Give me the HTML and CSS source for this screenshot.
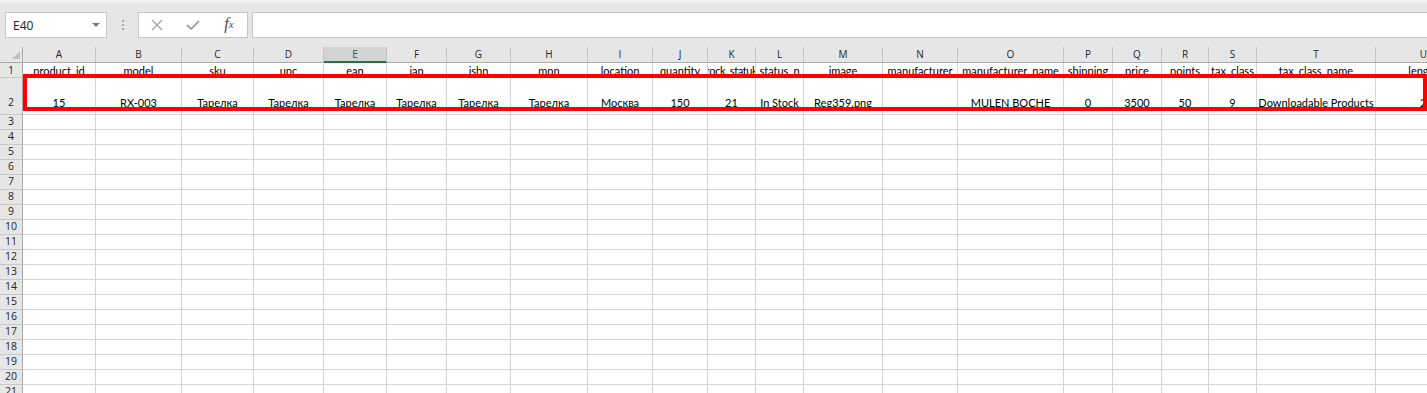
FILE: index.html
```html
<!DOCTYPE html>
<html lang="en">

<head>
  <meta charset="UTF-8" />
  <title>products.xlsx - Excel</title>
  <meta name="viewport" content="width=device-width, initial-scale=1.0" />
  <link rel="stylesheet" href="styles.css">
</head>

<body>
  <!-- Formula bar -->
  <div class="formula-bar">
    <div class="name-box">
      <span>E40</span>
      <span class="caret"></span>
    </div>
    <div class="grip"><i></i><i></i><i></i></div>
    <div class="fx-buttons">
      <span class="fx-btn">
        <svg width="12" height="12" viewBox="0 0 12 12">
          <path d="M1 1 L11 11 M11 1 L1 11" stroke="#a3a3a3" stroke-width="1.3" fill="none" />
        </svg>
      </span>
      <span class="fx-btn">
        <svg width="14" height="10" viewBox="0 0 14 10">
          <path d="M1 5 L5 9 L13 1" stroke="#a3a3a3" stroke-width="1.8" fill="none" />
        </svg>
      </span>
      <span class="fx-btn fx">f<sub>x</sub></span>
    </div>
    <div class="formula-input"></div>
  </div>

  <!-- Sheet -->
  <div class="sheet" id="sheet">
    <div class="row heads">
      <div class="corner"><span class="tri"></span></div>
      <div>A</div><div>B</div><div>C</div><div>D</div><div class="active">E</div>
      <div>F</div><div>G</div><div>H</div><div>I</div><div>J</div><div>K</div>
      <div>L</div><div>M</div><div>N</div><div>O</div><div>P</div><div>Q</div>
      <div>R</div><div>S</div><div>T</div><div>U</div>
    </div>

    <div class="row r1">
      <div class="rh">1</div>
      <div>product_id</div><div>model</div><div>sku</div><div>upc</div><div>ean</div>
      <div>jan</div><div>isbn</div><div>mpn</div><div>location</div><div>quantity</div>
      <div class="tight">tock_statuk</div><div>status_n</div><div>image</div><div>manufacturer</div>
      <div>manufacturer_name</div><div>shipping</div><div>price</div><div>points</div>
      <div>tax_class</div><div>tax_class_name</div><div>length</div>
    </div>

    <div class="row r2">
      <div class="rh">2</div>
      <div>15</div><div>RX-003</div><div>Тарелка</div><div>Тарелка</div><div>Тарелка</div>
      <div>Тарелка</div><div>Тарелка</div><div>Тарелка</div><div>Москва</div><div>150</div>
      <div>21</div><div>In Stock</div><div>Reg359.png</div><div></div>
      <div>MULEN BOCHE</div><div>0</div><div>3500</div><div>50</div>
      <div>9</div><div>Downloadable Products</div><div class="num">2</div>
    </div>

    <div class="highlight"></div>
  </div>

  <script>
    // empty rows below the data
    const sheet = document.getElementById("sheet");
    for (let i = 3; i <= 21; i++) {
      const row = document.createElement("div");
      row.className = "row";
      row.innerHTML = `<div class="rh">${i}</div>` + "<div></div>".repeat(21);
      sheet.insertBefore(row, sheet.querySelector(".highlight"));
    }
  </script>
</body>

</html>
```

FILE: styles.css
```css
* {
  box-sizing: border-box;
  margin: 0;
  padding: 0;
}

body {
  font-family: 'Lato', 'Open Sans', sans-serif;
  background-color: #ffffff;
  overflow: hidden;
  width: 1427px;
  height: 393px;
}

/* Formula bar */
.formula-bar {
  height: 47px;
  background-color: #e6e6e6;
  border-top: 3px solid #efefef;
  padding-top: 9px;
  display: flex;
  align-items: flex-start;
}

.name-box {
  margin-left: 5px;
  width: 102px;
  height: 26px;
  background-color: #ffffff;
  border: 1px solid #c6c6c6;
  display: flex;
  align-items: center;
  padding-left: 7px;
  font-family: 'Open Sans', sans-serif;
  font-size: 12px;
  color: #222;
}

.caret {
  margin-left: auto;
  margin-right: 6px;
  width: 0;
  height: 0;
  border-left: 4px solid transparent;
  border-right: 4px solid transparent;
  border-top: 4px solid #7a7a7a;
}

.grip {
  width: 31px;
  height: 26px;
  display: flex;
  flex-direction: column;
  align-items: center;
  justify-content: center;
  gap: 2px;
}

.grip i {
  display: block;
  width: 2px;
  height: 2px;
  background-color: #a8a8a8;
}

.fx-buttons {
  width: 110px;
  height: 26px;
  background-color: #ffffff;
  border: 1px solid #c6c6c6;
  display: flex;
}

.fx-btn {
  width: 36px;
  display: flex;
  align-items: center;
  justify-content: center;
}

.fx {
  font-family: 'Liberation Serif', serif;
  font-style: italic;
  font-size: 16px;
  color: #4a4a4a;
  padding-bottom: 2px;
}

.fx sub {
  font-size: 11px;
  vertical-align: -1px;
}

.formula-input {
  flex: 1;
  height: 26px;
  margin-left: 4px;
  background-color: #ffffff;
  border: 1px solid #c6c6c6;
  border-right: none;
}

/* Sheet grid */
.sheet {
  position: relative;
}

.row {
  display: grid;
  grid-template-columns: 23px 73px 86px 72px 70px 63px 60px 64px 77px 65px 55px 48px 48px 79px 75px 106px 49px 49px 47px 48px 119px 96px;
  height: 15px;
  width: 1472px;
}

.row > div {
  min-width: 0;
  overflow: hidden;
  white-space: nowrap;
  display: flex;
  justify-content: center;
  align-items: flex-end;
  border-right: 1px solid #d4d4d4;
  border-bottom: 1px solid #d4d4d4;
  font-size: 11px;
  line-height: 11px;
  color: #000;
}

.row > .rh {
  background-color: #e6e6e6;
  border-right-color: #a9a9a9;
  border-bottom-color: #c8c8c8;
  font-family: 'Open Sans', sans-serif;
  font-size: 10.5px;
  color: #262626;
  padding-bottom: 2px;
}

/* Column letters */
.row.heads {
  height: 16px;
}

.row.heads > div {
  background-color: #e6e6e6;
  border-right-color: #c4c4c4;
  border-bottom-color: #ababab;
  align-items: center;
  font-family: 'Open Sans', sans-serif;
  font-size: 10px;
  line-height: 15px;
  color: #262626;
}

.row.heads > .active {
  background-color: #d3d3d3;
  border-bottom: 2px solid #217346;
  color: #1f5e3c;
}

.row.heads > .corner {
  justify-content: flex-end;
  align-items: flex-end;
  padding: 0 2px 3px 0;
  border-right-color: #a9a9a9;
}

.tri {
  width: 0;
  height: 0;
  border-left: 8px solid transparent;
  border-bottom: 8px solid #bfbfbf;
}

/* Data rows */
.row.r1 > div {
  padding-bottom: 1px;
}

.row.r1 > .tight {
  letter-spacing: -0.4px;
}

.row.r2 {
  height: 37px;
}

.row.r2 > div {
  padding-bottom: 6px;
}

.row.r2 > .rh {
  padding-bottom: 6px;
}

.row.r2 > .num {
  justify-content: flex-start;
  padding-left: 44px;
}

/* Red selection frame drawn over rows 1-2 */
.highlight {
  position: absolute;
  left: 23px;
  top: 27px;
  width: 1404px;
  height: 37px;
  border: 4px solid #ff0000;
}
```
